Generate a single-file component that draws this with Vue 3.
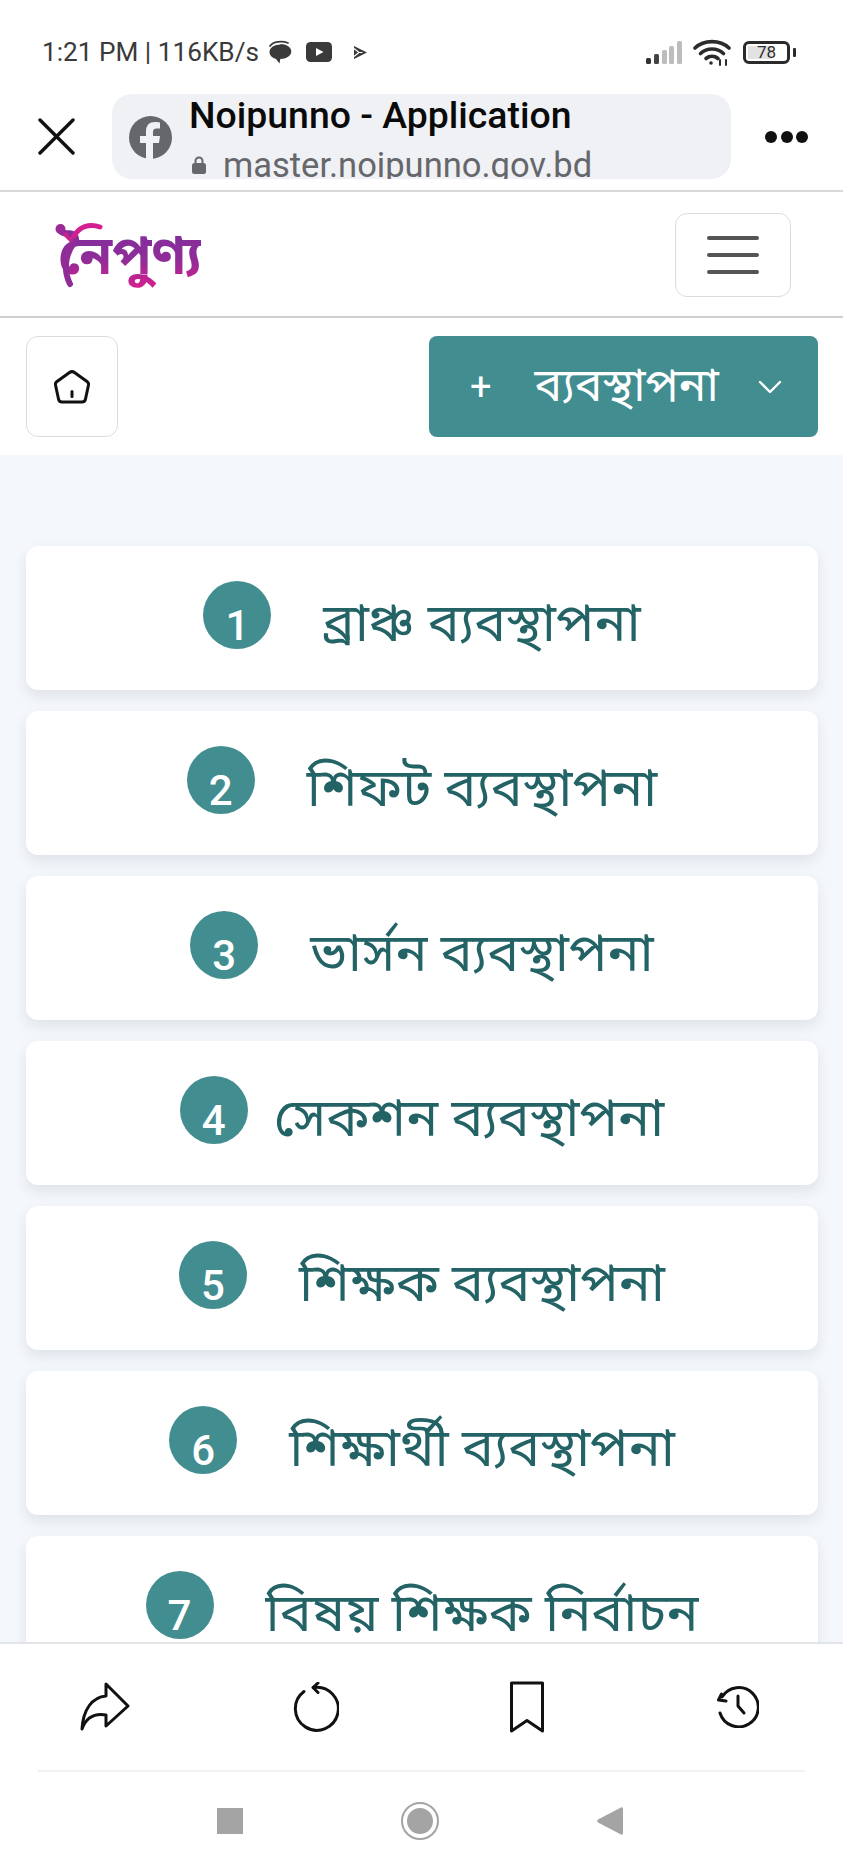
<template>
  <div class="screen">
    <div class="status-bar">
      <span class="status-text">1:21 PM | 116KB/s</span>
      <svg class="st-bubble" width="24" height="24" viewBox="0 0 24 24">
        <path d="M2 6C5 1.500 14 .5 20 3" fill="none" stroke="#3a3a3a" stroke-width="1.800" stroke-linecap="round"/>
        <path d="M12.500 4.500C6.500 4.500 1.500 7.500 1.500 12c0 3.400 3 6 6.500 7l3.500 4.500.8-4.500c6 0 11-3.200 11-7.500s-5-7.500-10.800-7.500z" fill="#3a3a3a"/>
      </svg>
      <svg class="st-yt" width="26" height="20" viewBox="0 0 26 20"><rect width="26" height="20" rx="4.500" fill="#3a3a3a"/><path d="M10 6l7.500 4-7.500 4z" fill="#fff"/></svg>
      <svg class="st-play" width="15" height="15" viewBox="0 0 15 15">
        <path d="M1 1l13 6.500L1 14z" fill="#3a3a3a"/>
        <path d="M1 3.500l5 4-5 4M6 7.500h3.500" fill="none" stroke="#fff" stroke-width="1.200"/>
      </svg>
      <div class="status-right">
        <svg width="36" height="23" viewBox="0 0 36 23">
          <rect x="0" y="17" width="5" height="6" rx="1.500" fill="#333"/>
          <rect x="8" y="13" width="5" height="10" rx="1.500" fill="#444"/>
          <rect x="16" y="9" width="5" height="14" rx="1.500" fill="#bdbdbd"/>
          <rect x="23" y="5" width="5" height="18" rx="1.500" fill="#bdbdbd"/>
          <rect x="31" y="0" width="5" height="23" rx="1.500" fill="#bdbdbd"/>
        </svg>
        <svg class="st-wifi" width="38" height="27" viewBox="0 0 38 27" fill="none" stroke="#2b2b2b" stroke-width="3.600" stroke-linecap="round">
          <path d="M2 9C11 .5 27 .5 36 9"/>
          <path d="M7.500 14.500c6.500-6 16.500-6 23 0"/>
          <path d="M13 19.500c3.500-2.800 8.500-2.800 12 0"/>
          <circle cx="18" cy="24" r="1.800" fill="#2b2b2b" stroke="none"/>
          <path d="M27 26v-5M33 26v-5" stroke-width="2"/>
        </svg>
        <div class="battery">
          <span class="battery-fill"></span>
          <span class="battery-num">78</span>
        </div>
        <span class="battery-nub"></span>
      </div>
    </div>

    <div class="browser-bar">
      <svg class="close-icon" width="37" height="37" viewBox="0 0 37 37" fill="none" stroke="#111" stroke-width="3.400" stroke-linecap="round"><path d="M2 2l33 33M35 2L2 35"/></svg>
      <div class="url-pill">
        <svg class="fb-icon" width="43" height="43" viewBox="0 0 43 43">
          <circle cx="21.500" cy="21.500" r="21.500" fill="#65676b"/>
          <path d="M24 43V27h6l1-7h-7v-4c0-2.200 1-3.500 3.600-3.500H31V6.500C29.800 6.300 28 6 26 6c-5.500 0-9 3.200-9 9.200V20h-6v7h6v16z" fill="#eff1f5"/>
        </svg>
        <div class="url-text">
          <div class="page-title">Noipunno - Application</div>
          <div class="page-url">
            <svg width="14" height="18" viewBox="0 0 14 18"><path d="M3.500 8V5a3.500 3.500 0 0 1 7 0v3" fill="none" stroke="#65676b" stroke-width="2"/><rect y="7" width="14" height="11" rx="2.500" fill="#65676b"/></svg>
            <span>master.noipunno.gov.bd</span>
          </div>
        </div>
      </div>
      <div class="more-dots"><i></i><i></i><i></i></div>
    </div>

    <header class="site-header">
      <div class="logo">
        <span class="logo-text">নৈপুণ্য</span>
        <svg class="logo-mark" width="50" height="66" viewBox="0 0 50 66" fill="none">
          <circle cx="5.500" cy="7" r="5" fill="#9c2a96"/>
          <path d="M9 11l10 10" stroke="#c6248f" stroke-width="4.500"/>
          <path d="M19 14C24 5 34 1 45 5" stroke="#d31f8f" stroke-width="5" stroke-linecap="round"/>
          <path d="M19 21C9 34 9 50 15 62" stroke="#8f2c98" stroke-width="6" stroke-linecap="round"/>
        </svg>
      </div>
      <button type="button" class="menu-btn" aria-label="Menu">
        <i></i><i></i><i></i>
      </button>
    </header>

    <div class="tool-bar">
      <button type="button" class="home-btn" aria-label="Home">
        <svg width="36" height="36" viewBox="0 0 36 36" fill="none" stroke="#111" stroke-width="3" stroke-linecap="round">
          <path d="M15.500 3.500Q18 1.800 20.500 3.500L33 12.500Q35 14 34.500 16L31.500 30Q31 33 28 33H8Q5 33 4.500 30L1.500 16Q1 14 3 12.500z"/>
          <path d="M18 22.500v5"/>
        </svg>
      </button>
      <button type="button" class="manage-btn">
        <span class="plus">+</span>
        <span class="manage-label">ব্যবস্থাপনা</span>
        <svg width="24" height="14" viewBox="0 0 24 14" fill="none" stroke="#fff" stroke-width="2.400" stroke-linecap="round" stroke-linejoin="round"><path d="M2 2l10 10L22 2"/></svg>
      </button>
    </div>

    <main class="content">
      <a v-for="item in items" :key="item.n" class="card" :class="{ tight: item.tight }">
        <span class="num"><span>{{ item.n }}</span></span>
        <span class="card-label">{{ item.label }}</span>
      </a>
    </main>

    <div class="bottom-panel">
      <div class="actions">
        <svg width="50" height="50" viewBox="0 0 50 50" fill="none" stroke="#111" stroke-width="3" stroke-linejoin="round" stroke-linecap="round">
          <path d="M26 2L48 24 26 44V33C14 31 6 36 2 47 3 28 12 15 26 14z"/>
        </svg>
        <svg width="46" height="50" viewBox="0 0 46 50" fill="none" stroke="#111" stroke-width="3" stroke-linecap="round" stroke-linejoin="round">
          <path d="M11 9.500A21.500 21.500 0 1 0 20.500 5.500"/>
          <path d="M25 1l-5 4.500 5 5"/>
        </svg>
        <svg width="36" height="52" viewBox="0 0 36 52" fill="none" stroke="#111" stroke-width="3" stroke-linejoin="round">
          <path d="M2.500 2h31v48L18 39.500 2.500 50z"/>
        </svg>
        <svg width="42" height="42" viewBox="0 0 42 42" fill="none" stroke="#111" stroke-width="3" stroke-linecap="round" stroke-linejoin="round">
          <path d="M5 11A19.600 19.600 0 1 1 3 27"/>
          <path d="M4.500 8l-3 6 7.500 1"/>
          <path d="M21 10v10l6 7"/>
        </svg>
      </div>
      <div class="actions-rule"></div>
      <div class="android-nav">
        <span class="nav-square"></span>
        <span class="nav-circle"></span>
        <svg width="26" height="30" viewBox="0 0 26 30"><path d="M24 1.500c1-.5 2 0 2 1.500v24c0 1.500-1 2-2 1.500L1 16.500c-1-.8-1-2.200 0-3z" fill="#a4a4a4"/></svg>
      </div>
    </div>
  </div>
</template>

<script setup>
const items = [
  { n: 1, label: 'ব্রাঞ্চ ব্যবস্থাপনা' },
  { n: 2, label: 'শিফট ব্যবস্থাপনা' },
  { n: 3, label: 'ভার্সন ব্যবস্থাপনা' },
  { n: 4, label: 'সেকশন ব্যবস্থাপনা', tight: true },
  { n: 5, label: 'শিক্ষক ব্যবস্থাপনা' },
  { n: 6, label: 'শিক্ষার্থী ব্যবস্থাপনা' },
  { n: 7, label: 'বিষয় শিক্ষক নির্বাচন' }
]
</script>

<style scoped>
.screen {
  width: 843px;
  height: 1873px;
  display: flex;
  flex-direction: column;
  overflow: hidden;
  background: #fff;
  font-family: Roboto, "Noto Sans", "Noto Sans Bengali", "Lohit Bengali", sans-serif;
  color: #111;
}
button {
  font-family: inherit;
  cursor: pointer;
  padding: 0;
}
.status-bar {
  height: 94px;
  flex: none;
  display: flex;
  align-items: center;
  padding: 10px 47px 0 42px;
  box-sizing: border-box;
}
.status-text {
  width: 226px;
  font-size: 26.200px;
  color: #3a3a3a;
  white-space: nowrap;
}
.st-yt { margin-left: 14px; }
.st-play { margin-left: 21px; }
.status-right {
  margin-left: auto;
  display: flex;
  align-items: center;
}
.st-wifi { margin-left: 11px; }
.battery {
  position: relative;
  width: 47px;
  height: 23px;
  margin-left: 12px;
  border: 3px solid #2b2b2b;
  border-radius: 6px;
  box-sizing: border-box;
  display: flex;
  align-items: center;
  justify-content: center;
}
.battery-fill {
  position: absolute;
  left: 2px;
  top: 2px;
  bottom: 2px;
  width: 24px;
  background: #e2e2e2;
}
.battery-num {
  position: relative;
  font-size: 17px;
  color: #2b2b2b;
}
.battery-nub {
  width: 3px;
  height: 9px;
  margin-left: 3px;
  background: #2b2b2b;
  border-radius: 1px;
}
.browser-bar {
  height: 98px;
  flex: none;
  display: flex;
  align-items: flex-start;
  padding-left: 38px;
  box-sizing: border-box;
  border-bottom: 2px solid #d8d8d8;
}
.close-icon { margin: 24px 37px 0 0; }
.url-pill {
  width: 619px;
  height: 85px;
  background: #eff1f5;
  border-radius: 20px;
  display: flex;
  overflow: hidden;
  flex: none;
}
.fb-icon { margin: 22px 17px 0 17px; flex: none; }
.url-text { min-width: 0; }
.page-title {
  font-size: 37.400px;
  font-weight: 500;
  line-height: 44px;
  margin-top: -1px;
  color: #0a0a0a;
  white-space: nowrap;
}
.page-url {
  display: flex;
  align-items: center;
  gap: 17px;
  margin: 7px 0 0 3px;
  font-size: 34.500px;
  line-height: 42px;
  color: #65676b;
  white-space: nowrap;
}
.more-dots {
  display: flex;
  gap: 3.500px;
  margin: 37px 0 0 34px;
}
.more-dots i {
  width: 12px;
  height: 12px;
  border-radius: 50%;
  background: #111;
}
.site-header {
  height: 126px;
  flex: none;
  box-sizing: border-box;
  border-bottom: 2px solid #cfcfcf;
  display: flex;
  align-items: center;
  justify-content: space-between;
  padding: 2px 52px 0 55px;
}
.logo {
  position: relative;
  width: 148px;
  height: 66px;
}
.logo-mark {
  position: absolute;
  left: 0;
  top: 0;
}
.logo-text {
  position: absolute;
  left: 3px;
  top: 1px;
  font-size: 53px;
  line-height: 66px;
  font-weight: 700;
  white-space: nowrap;
  color: #a3238f;
  background: linear-gradient(180deg, #7e2f9d, #8f2c98 55%, #d91e8d);
  -webkit-background-clip: text;
  background-clip: text;
  -webkit-text-fill-color: transparent;
}
.menu-btn {
  width: 116px;
  height: 84px;
  background: #fff;
  border: 1.500px solid #dcdcdc;
  border-radius: 12px;
  display: flex;
  flex-direction: column;
  align-items: center;
  justify-content: center;
  gap: 13px;
}
.menu-btn i {
  width: 52px;
  height: 4px;
  border-radius: 2px;
  background: #555;
}
.tool-bar {
  height: 137px;
  flex: none;
  box-sizing: border-box;
  display: flex;
  align-items: flex-start;
  justify-content: space-between;
  padding: 18px 25px 0 26px;
}
.home-btn {
  width: 92px;
  height: 101px;
  background: #fff;
  border: 1.500px solid #dcdcdc;
  border-radius: 12px;
  display: flex;
  align-items: center;
  justify-content: center;
}
.manage-btn {
  width: 389px;
  height: 101px;
  border: none;
  border-radius: 8px;
  background: #428d90;
  color: #fff;
  display: flex;
  align-items: center;
  padding: 0 36px 0 41px;
  box-sizing: border-box;
}
.plus {
  font-size: 38px;
  font-weight: 400;
}
.manage-label {
  margin-left: 43px;
  font-size: 46.300px;
  white-space: nowrap;
  transform: translateY(2px);
}
.manage-btn svg { margin-left: auto; }
.content {
  flex: 1;
  min-height: 0;
  overflow: hidden;
  background: #f4f7fb;
  display: flex;
  flex-direction: column;
  gap: 21px;
  padding: 91px 25px 0 26px;
}
.card {
  flex: none;
  height: 144px;
  background: #fff;
  border-radius: 12px;
  box-shadow: 0 6px 14px rgba(40, 60, 80, 0.1);
  display: flex;
  align-items: center;
  justify-content: center;
  gap: 52px;
}
.card.tight { gap: 26px; }
.num {
  width: 68px;
  height: 68px;
  flex: none;
  border-radius: 50%;
  background: #428d90;
  color: #fff;
  font-size: 42px;
  font-weight: 500;
  display: flex;
  align-items: center;
  justify-content: center;
  transform: translateY(-3px);
}
.num span { transform: translateY(10px); }
.card-label {
  font-size: 53.500px;
  color: #236265;
  white-space: nowrap;
  transform: translateY(9px);
}
.bottom-panel {
  height: 231px;
  flex: none;
  background: #fff;
  border-top: 2px solid #e2e4e7;
  box-sizing: border-box;
}
.actions {
  height: 126px;
  display: grid;
  grid-template-columns: repeat(4, 1fr);
  align-items: center;
  justify-items: center;
}
.actions-rule {
  height: 2px;
  margin: 0 38px;
  background: #f1f1f1;
}
.android-nav {
  display: flex;
  align-items: center;
  justify-content: center;
  gap: 158px;
  height: 98px;
  padding-right: 3px;
}
.nav-square {
  width: 26px;
  height: 26px;
  background: #a4a4a4;
}
.nav-circle {
  width: 38px;
  height: 38px;
  box-sizing: border-box;
  border-radius: 50%;
  background: #a4a4a4;
  border: 6px solid #fff;
  outline: 2.500px solid #a4a4a4;
  outline-offset: -2.500px;
}
</style>
